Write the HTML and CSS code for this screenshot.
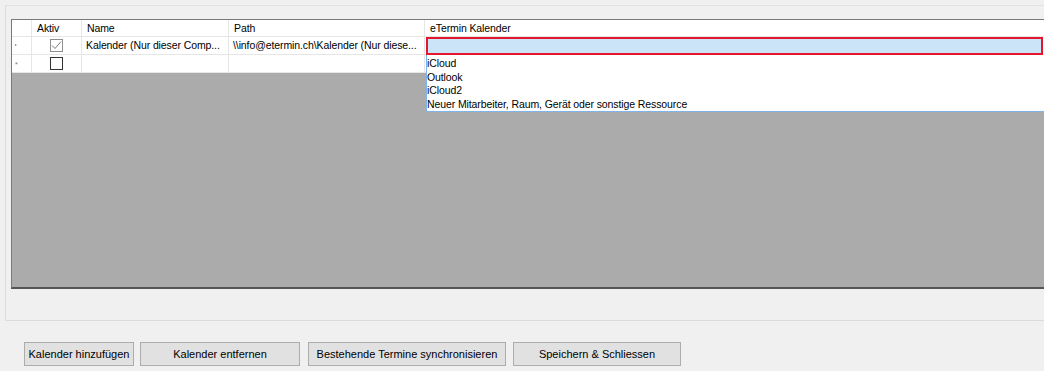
FILE: index.html
```html
<!DOCTYPE html>
<html>
<head>
<meta charset="utf-8">
<link rel="stylesheet" href="styles.css">
</head>
<body>
<div class="window">
  <div class="group">
    <div class="grid">
      <div class="row head">
        <div class="cell rh"></div>
        <div class="cell c-aktiv">Aktiv</div>
        <div class="cell c-name">Name</div>
        <div class="cell c-path">Path</div>
        <div class="cell c-cal">eTermin Kalender</div>
      </div>
      <div class="row">
        <div class="cell rh"><span class="arrow"></span></div>
        <div class="cell c-aktiv center"><span class="check checked"><svg width="11" height="11" viewBox="0 0 11 11"><path d="M1 5.5 L4 8.5 L10 1.5" fill="none" stroke="#7a7a7a" stroke-width="1"/></svg></span></div>
        <div class="cell c-name">Kalender (Nur dieser Comp...</div>
        <div class="cell c-path">\\info@etermin.ch\Kalender (Nur diese...</div>
        <div class="cell c-cal edit">
          <div class="editbox"></div>
          <div class="droplist">
            <div class="item">iCloud</div>
            <div class="item">Outlook</div>
            <div class="item">iCloud2</div>
            <div class="item">Neuer Mitarbeiter, Raum, Gerät oder sonstige Ressource</div>
          </div>
        </div>
      </div>
      <div class="row">
        <div class="cell rh"><span class="star">*</span></div>
        <div class="cell c-aktiv center"><span class="check"></span></div>
        <div class="cell c-name"></div>
        <div class="cell c-path"></div>
        <div class="cell c-cal"></div>
      </div>
      <div class="empty"></div>
    </div>
  </div>
  <div class="buttons">
    <button class="btn b1">Kalender hinzufügen</button>
    <button class="btn b2">Kalender entfernen</button>
    <button class="btn b3">Bestehende Termine synchronisieren</button>
    <button class="btn b4">Speichern &amp; Schliessen</button>
  </div>
</div>
</body>
</html>
```

FILE: styles.css
```css
html, body {
  margin: 0;
  padding: 0;
  background: #f0f0f0;
  overflow: hidden;
  width: 1044px;
  height: 371px;
}
body {
  font-family: "Liberation Sans", Arial, sans-serif;
  font-size: 11px;
  color: #000;
}
.window {
  display: flex;
  flex-direction: column;
  width: 1044px;
  height: 371px;
}
.group {
  margin: 5px 0 0 5px;
  height: 316px;
  width: 1060px;
  border-top: 1px solid #e2e2e2;
  border-left: 1px solid #dcdcdc;
  border-bottom: 1px solid #dcdcdc;
  box-sizing: border-box;
  padding: 13px 0 0 5px;
}
.grid {
  width: 1060px;
  height: 270px;
  box-sizing: border-box;
  border: 1px solid #7a7a7a;
  border-bottom: 2px solid #555;
  display: flex;
  flex-direction: column;
  background: #ababab;
  font-size: 10.5px;
  letter-spacing: -0.1px;
}
.row {
  display: flex;
  height: 18px;
  background: #fff;
  flex: none;
}
.row.head {
  height: 17px;
}
.cell {
  box-sizing: border-box;
  border-right: 1px solid #e6e6e6;
  border-bottom: 1px solid #e6e6e6;
  padding: 0 0 0 4px;
  line-height: 17px;
  white-space: nowrap;
  overflow: visible;
  position: relative;
}
.head .cell {
  line-height: 16px;
  padding-left: 5px;
}
.rh { width: 20px; padding: 0; }
.c-aktiv { width: 50px; }
.c-name { width: 147px; }
.c-path { width: 196px; }
.c-cal { flex: 1; border-right: none; }
.center {
  display: flex;
  justify-content: center;
  align-items: center;
  padding: 0;
}
.check {
  width: 11px;
  height: 11px;
  border: 1px solid #333;
  background: #fff;
  display: flex;
  align-items: center;
  justify-content: center;
}
.check.checked {
  border-color: #8f8f8f;
}
.arrow {
  position: absolute;
  left: 3px;
  top: 7px;
  width: 0;
  height: 0;
  border-top: 1.5px solid transparent;
  border-bottom: 1.5px solid transparent;
  border-left: 2px solid #777;
}
.star {
  position: absolute;
  left: 3px;
  top: 1px;
  font-size: 7px;
  color: #777;
}
.edit {
  padding: 0;
}
.editbox {
  position: absolute;
  left: 1px;
  top: 0;
  width: 617px;
  height: 18px;
  box-sizing: border-box;
  border: 2px solid #e3162c;
  background: #cce4f7;
  z-index: 2;
}
.droplist {
  position: absolute;
  left: 1px;
  top: 18px;
  width: 640px;
  height: 57px;
  box-sizing: border-box;
  background: #fff;
  border-left: 1px solid #7eb4ea;
  border-bottom: 1px solid #7eb4ea;
  padding-top: 1px;
  z-index: 3;
}
.item {
  height: 13.5px;
  line-height: 14px;
  padding-left: 0;
}
.empty {
  flex: 1;
  background: #ababab;
}
.buttons {
  display: flex;
  margin: 21px 0 0 24px;
  gap: 6px;
}
.btn {
  font-family: "Liberation Sans", Arial, sans-serif;
  font-size: 11px;
  height: 24px;
  background: #e1e1e1;
  border: 1px solid #adadad;
  padding: 0;
  color: #000;
  margin: 0;
}
.b1 { width: 110px; }
.b2 { width: 160px; }
.b3 { width: 198px; margin-left: 2px; }
.b4 { width: 168px; margin-left: 1px; }
```
